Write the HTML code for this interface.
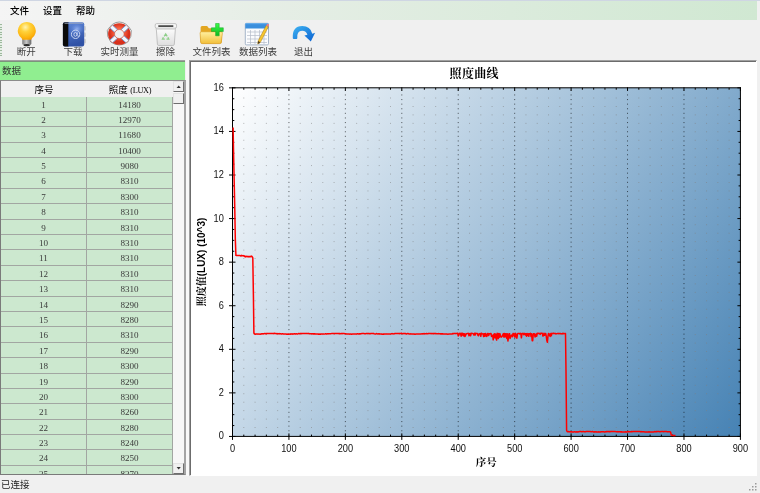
<!DOCTYPE html>
<html lang="zh"><head><meta charset="utf-8"><title>照度曲线</title>
<style>
html,body{margin:0;padding:0}
body{width:760px;height:493px;overflow:hidden;position:relative;background:#f0f0f0;font-family:"Liberation Serif","Noto Sans CJK SC",sans-serif;font-size:9.5px;color:#000}
.abs{position:absolute}
.topline{left:0;top:0;width:760px;height:1px;background:#cfd6e3}
.menubar{left:0;top:1px;width:757px;height:19px;background:linear-gradient(to right,#f5f5f5,#e6eee6 35%,#d0e8d2)}
.menubar span{position:absolute;top:4.3px;font-size:9.5px;line-height:12px;font-weight:500}
.toolbar{left:0;top:20px;width:760px;height:40px;background:#f0f0f0}
.grip{left:0;top:24px;width:2px;height:32px;background:repeating-linear-gradient(#9db89d 0 1px,#e6efe6 1px 2.6px)}
.tl{position:absolute;top:47.3px;width:40px;height:11px;text-align:center;font-size:9.5px;line-height:11px;color:#3c3c3c;white-space:nowrap}
.lhead{left:0;top:60px;width:185px;height:20px;background:#90ee90;box-sizing:border-box;border-top:1px solid #a2a0a2;box-shadow:inset 0 1px 0 #7c947c}
.lhead span{position:absolute;left:2px;top:3.5px;line-height:12px;color:#333}
.grid{left:0;top:80px;width:186px;height:395px;background:#fff;box-sizing:border-box;border:1px solid #7a7a7a;border-top-color:#8c8c8c;border-right:2px solid #a4a4a4;overflow:hidden}
.ghead{position:absolute;left:0;top:0;width:172px;height:15.5px;background:#f0f0f0;}
.ghead span{position:absolute;top:2.7px;line-height:12px;text-align:center;font-size:9.5px}
.ghead i{font-style:normal;font-size:8.3px;letter-spacing:-.35px;margin-left:2.5px}
.rows{position:absolute;left:0;top:15.5px;width:172px}
.r{height:15.4px;box-sizing:border-box;border-bottom:1px solid #a2a6a2;background:#cce8cf;position:relative}
.r span{position:absolute;top:0;height:14.4px;line-height:16.6px;text-align:center;color:#3a3a3a;font-size:9.1px}
.c1{left:0;width:85px;border-right:1px solid #a2a6a2}
.c2{left:86px;width:85px;border-right:1px solid #a2a6a2}
.sb{position:absolute;left:172px;top:0;width:11px;height:393px;background:#f7f7f7}
.sbtn{position:absolute;left:0;width:11px;height:11.3px;background:#f0f0f0;border:1px solid #6e6e6e;box-sizing:border-box;border-left-color:#e3e3e3;border-top-color:#e3e3e3}
.thumb{position:absolute;left:0;top:11.5px;width:11px;height:11.7px;background:#f0f0f0;border:1px solid #6e6e6e;border-left-color:#e3e3e3;border-top-color:#e3e3e3;box-sizing:border-box}
.split{left:186px;top:60px;width:3px;height:416px;background:#f8f8f8}
.chartwrap{left:189px;top:60px;width:568px;height:416px;box-sizing:border-box;border-left:1px solid #a0a0a0;border-top:1px solid #a0a0a0;border-right:1px solid #e6e6e6;border-bottom:1px solid #e6e6e6;background:#fff}
.chartwrap:after{content:'';position:absolute;left:0;top:0;right:0;bottom:0;border-left:1px solid #6c6c6c;border-top:1px solid #6c6c6c;pointer-events:none}
.chart{position:absolute;left:1px;top:0;display:block}
.status{left:0;top:476px;width:760px;height:17px;background:#f0f0f0}
.status span{position:absolute;left:1px;top:3px;line-height:12px;font-size:9.5px;color:#222}
#root{position:absolute;left:0;top:0;width:760px;height:493px;will-change:transform}
</style></head><body><div id="root">
<div class="abs topline"></div>
<div class="abs menubar"><span style="left:10px">文件</span><span style="left:43px">设置</span><span style="left:76px">帮助</span></div>
<div class="abs toolbar"></div>
<div class="abs grip"></div>
<svg class="abs" style="left:0;top:20px" width="340" height="30" viewBox="0 20 340 30">
<defs>
<radialGradient id="bulb" cx="0.42" cy="0.3" r="0.75"><stop offset="0" stop-color="#fff3b0"/><stop offset="0.35" stop-color="#ffd23a"/><stop offset="0.8" stop-color="#fdb20d"/><stop offset="1" stop-color="#f09a00"/></radialGradient>
<linearGradient id="base" x1="0" x2="1" y1="0" y2="0"><stop offset="0" stop-color="#8a8a8a"/><stop offset="0.45" stop-color="#e8e8e8"/><stop offset="1" stop-color="#6e6e6e"/></linearGradient>
<linearGradient id="cover" x1="0" x2="0.300" y1="0" y2="1"><stop offset="0" stop-color="#5f88da"/><stop offset="1" stop-color="#3052a6"/></linearGradient>
<radialGradient id="coverhl"><stop offset="0" stop-color="#a9c4ff" stop-opacity=".75"/><stop offset="1" stop-color="#6f95e6" stop-opacity="0"/></radialGradient>
<radialGradient id="buoy" cx="0.5" cy="0.4" r="0.6"><stop offset="0.4" stop-color="#ff6a4a"/><stop offset="1" stop-color="#d8301c"/></radialGradient>
<linearGradient id="bin" x1="0" x2="0" y1="0" y2="1"><stop offset="0" stop-color="#ffffff"/><stop offset="1" stop-color="#dedede"/></linearGradient>
<linearGradient id="fold" x1="0" x2="0" y1="0" y2="1"><stop offset="0" stop-color="#fff0a0"/><stop offset="1" stop-color="#f2bf3a"/></linearGradient>
<linearGradient id="plus" x1="0" x2="0" y1="0" y2="1"><stop offset="0" stop-color="#3dff4a"/><stop offset="1" stop-color="#0db520"/></linearGradient>
<linearGradient id="arr" x1="0" x2="1" y1="0" y2="1"><stop offset="0" stop-color="#3fb4f2"/><stop offset="1" stop-color="#0a5fd0"/></linearGradient>
</defs>
<!-- bulb -->
<g>
<path d="M22.3 38.2h9v5.2q0 2.2-4.5 2.2t-4.5-2.200z" fill="url(#base)"/>
<path d="M22.3 41h9M22.3 43h9" stroke="#555" stroke-width=".7" opacity=".6"/><ellipse cx="26.800" cy="45.200" rx="3.200" ry="1.100" fill="#2a2a2a"/>
<path d="M26.8 21.9a8.9 8.9 0 0 1 5.600 15.800q-1 .9-1.100 2h-9q-.1-1.100-1.100-2a8.900 8.900 0 0 1 5.600-15.800z" fill="url(#bulb)"/>
</g>
<!-- book -->
<g>
<rect x="83" y="26" width="3" height="4.600" rx="1.200" fill="#d2d2d2"/><rect x="83" y="32.400" width="3" height="4.600" rx="1.200" fill="#d2d2d2"/><rect x="83" y="38.800" width="3" height="4.600" rx="1.200" fill="#d2d2d2"/>
<rect x="62.900" y="22.200" width="21.300" height="24.300" rx="2" fill="url(#cover)"/>
<ellipse cx="77" cy="29" rx="7" ry="6" fill="url(#coverhl)"/>
<path d="M64.900 22.200h3.300v24.300h-3.300a2 2 0 0 1-2-2v-20.300a2 2 0 0 1 2-2z" fill="#0a0a0a"/>
<rect x="68.200" y="22.200" width=".9" height="24.300" fill="#27427f"/>
<path d="M64.500 23.300h18.500" stroke="#9aa6c0" stroke-width="1.100" opacity=".8"/>
<circle cx="75.600" cy="34.300" r="4.200" fill="none" stroke="#c6d3f1" stroke-width="1"/>
<ellipse cx="75.400" cy="34.400" rx="1.500" ry="1.900" fill="none" stroke="#c6d3f1" stroke-width="1"/>
<path d="M77.200 32.300v3.200q.4 1.500 1.900.4" fill="none" stroke="#c6d3f1" stroke-width=".9"/>
</g>
<!-- lifebuoy -->
<g>
<clipPath id="ringclip"><path clip-rule="evenodd" d="M108.100 34a11.200 10.700 0 1 0 22.400 0a11.200 10.700 0 1 0-22.400 0zM114.500 34a4.800 4.500 0 1 1 9.600 0a4.800 4.500 0 1 1-9.600 0z"/></clipPath>
<path d="M107.300 30.500q5-8.500 12-8.500t12 8.500q.8 6-3.500 11.500-4 3-8.500 3t-8.500-3q-4.300-5.500-3.500-11.500z" fill="none" stroke="#8f8f8f" stroke-width=".9"/>
<ellipse cx="119.300" cy="34" rx="8" ry="7.600" fill="none" stroke="url(#buoy)" stroke-width="6.400"/>
<g clip-path="url(#ringclip)">
<g stroke="#f2f8ff" stroke-width="3.600" fill="none"><path d="M109.300 24.700l7 6.500M129.300 24.700l-7 6.500M109.300 43.300l7-6.500M129.300 43.300l-7-6.500"/></g>
<g stroke="#6aa6e2" stroke-width=".9" fill="none"><path d="M110.600 23.300l7 6.500M108 26.100l7 6.500M128 23.300l-7 6.500M130.600 26.100l-7 6.500M110.600 44.700l7-6.500M108 41.900l7-6.500M128 44.700l-7-6.500M130.600 41.900l-7-6.500"/></g>
</g>
<ellipse cx="119.300" cy="34" rx="4.800" ry="4.500" fill="none" stroke="#c8402a" stroke-width=".5"/>
</g>
<!-- bin -->
<g>
<path d="M156.200 27h19.300l-1.200 17.300q-.1 1.200-1.400 1.200h-14.100q-1.300 0-1.400-1.200z" fill="url(#bin)" stroke="#b5b5b5" stroke-width=".8"/>
<rect x="155.200" y="23.600" width="21.300" height="4.600" rx="1.400" fill="#f6f6f6" stroke="#b5b5b5" stroke-width=".8"/>
<rect x="158.300" y="25.300" width="15" height="1.600" fill="#3a3a3a"/>
<path d="M155.800 29.300h20" stroke="#cfcfcf" stroke-width=".8"/>
<g fill="none" stroke="#8fcf8a" stroke-width="1.300"><path d="M164.200 36.300l1.500-2.400 1.500 2.400M167.900 37.200l.9 1.900h-2.300M163.400 37.300l-.9 1.800h2.300"/></g>
</g>
<!-- folder -->
<g>
<path d="M200.600 27.500q0-1.500 1.500-1.500h5l1.800 2.200h11.300q1.500 0 1.500 1.500v12.300q0 1.500-1.500 1.500h-18.100q-1.500 0-1.500-1.500z" fill="#e3a623"/>
<path d="M202.300 31.800h18.900q1.400 0 1.200 1.400l-1.100 9q-.2 1.400-1.600 1.400h-17.500q-1.400 0-1.500-1.400l-.6-9q-.1-1.400 1.300-1.400z" fill="url(#fold)" stroke="#d69a1c" stroke-width=".6"/>
<path d="M215.600 23.500h3.600v4.300h4.100v3.700h-4.100v4.300h-3.600v-4.300h-4.200v-3.700h4.200z" fill="url(#plus)" stroke="#12a524" stroke-width=".5"/>
</g>
<!-- table -->
<g>
<rect x="245.300" y="23.300" width="23.200" height="21.600" rx="1.200" fill="#fbfcfe" stroke="#8fa3bd" stroke-width=".8"/>
<path d="M245.300 24.500q0-1.200 1.200-1.200h20.800q1.200 0 1.200 1.200v3.900h-23.200z" fill="#3c8fdd"/>
<path d="M245.300 23.700h23.200" stroke="#6fb6f2" stroke-width=".8"/>
<g stroke="#b4bcc8" stroke-width=".7"><path d="M247 32h20M247 35.500h20M247 39h20M247 42.500h20M250.500 30v14M255 30v14M259.500 30v14M264 30v14"/></g>
<path d="M266.200 25.500l2.200 1.200-8 15.600-2.600 1.800.3-3.100z" fill="#f7c62f" stroke="#a97a12" stroke-width=".5"/>
<path d="M266.200 25.500l2.200 1.200.6-1.200q.4-1-.6-1.500-1-.5-1.600.4z" fill="#ef7b86"/>
<path d="M257.800 44.100l.3-3.100 2.300 1.300z" fill="#4a3a22"/>
</g>
<!-- exit arrow -->
<g>
<path d="M292.800 38.300q-.8-12 9.500-12.200 8 0 10 7.600l2.800-.9-4.300 8.700-6.400-5.900 3-.8q-1.300-4.200-5.300-4.100-5.500.4-4.800 7.400 0 .9-.9.900h-2.700q-.9 0-.9-.7z" fill="url(#arr)"/>
</g>
</svg>
<div class="tl" style="left:6.300px">断开</div>
<div class="tl" style="left:53px">下载</div>
<div class="tl" style="left:99.500px">实时测量</div>
<div class="tl" style="left:145.500px">擦除</div>
<div class="tl" style="left:191.500px">文件列表</div>
<div class="tl" style="left:238px">数据列表</div>
<div class="tl" style="left:283.500px">退出</div>

<div class="abs lhead"><span>数据</span></div>
<div class="abs grid">
 <div class="ghead"><span style="left:0;width:86px">序号</span><span style="left:86px;width:86px">照度<i>(LUX)</i></span></div>
 <div class="rows">
<div class="r"><span class="c1">1</span><span class="c2">14180</span></div>
<div class="r"><span class="c1">2</span><span class="c2">12970</span></div>
<div class="r"><span class="c1">3</span><span class="c2">11680</span></div>
<div class="r"><span class="c1">4</span><span class="c2">10400</span></div>
<div class="r"><span class="c1">5</span><span class="c2">9080</span></div>
<div class="r"><span class="c1">6</span><span class="c2">8310</span></div>
<div class="r"><span class="c1">7</span><span class="c2">8300</span></div>
<div class="r"><span class="c1">8</span><span class="c2">8310</span></div>
<div class="r"><span class="c1">9</span><span class="c2">8310</span></div>
<div class="r"><span class="c1">10</span><span class="c2">8310</span></div>
<div class="r"><span class="c1">11</span><span class="c2">8310</span></div>
<div class="r"><span class="c1">12</span><span class="c2">8310</span></div>
<div class="r"><span class="c1">13</span><span class="c2">8310</span></div>
<div class="r"><span class="c1">14</span><span class="c2">8290</span></div>
<div class="r"><span class="c1">15</span><span class="c2">8280</span></div>
<div class="r"><span class="c1">16</span><span class="c2">8310</span></div>
<div class="r"><span class="c1">17</span><span class="c2">8290</span></div>
<div class="r"><span class="c1">18</span><span class="c2">8300</span></div>
<div class="r"><span class="c1">19</span><span class="c2">8290</span></div>
<div class="r"><span class="c1">20</span><span class="c2">8300</span></div>
<div class="r"><span class="c1">21</span><span class="c2">8260</span></div>
<div class="r"><span class="c1">22</span><span class="c2">8280</span></div>
<div class="r"><span class="c1">23</span><span class="c2">8240</span></div>
<div class="r"><span class="c1">24</span><span class="c2">8250</span></div>
<div class="r"><span class="c1">25</span><span class="c2">8270</span></div>
<div class="r"><span class="c1">26</span><span class="c2">8260</span></div>
 </div>
 <div class="sb"><div class="sbtn" style="top:0"></div><div class="thumb"></div><div class="sbtn" style="top:382px"></div>
 <svg style="position:absolute;left:0;top:0" width="11" height="393"><path d="M3.6 7L5.7 4.500L7.800 7Z" fill="#333"/><path d="M3.600 386L5.700 388.500L7.800 386Z" fill="#333"/></svg></div>
</div>
<div class="abs split"></div>
<div class="abs chartwrap">
<svg class="chart" width="566" height="415" viewBox="191 61 566 415">
<defs><linearGradient id="g" gradientUnits="userSpaceOnUse" x1="232.5" y1="87.85" x2="740.4" y2="436.45"><stop offset="0" stop-color="#ffffff"/><stop offset="1" stop-color="#4682b4"/></linearGradient></defs>
<rect x="191" y="61" width="566" height="415" fill="#fff"/>
<rect x="232.5" y="87.8" width="507.9" height="348.6" fill="url(#g)"/>
<line x1="243.79" y1="89.1" x2="243.79" y2="436.4" stroke="#808080" stroke-opacity=".62" stroke-width="1" stroke-dasharray="0.9 7.55"/>
<line x1="255.07" y1="89.1" x2="255.07" y2="436.4" stroke="#808080" stroke-opacity=".62" stroke-width="1" stroke-dasharray="0.9 7.55"/>
<line x1="266.36" y1="89.1" x2="266.36" y2="436.4" stroke="#808080" stroke-opacity=".62" stroke-width="1" stroke-dasharray="0.9 7.55"/>
<line x1="277.65" y1="89.1" x2="277.65" y2="436.4" stroke="#808080" stroke-opacity=".62" stroke-width="1" stroke-dasharray="0.9 7.55"/>
<line x1="300.22" y1="89.1" x2="300.22" y2="436.4" stroke="#808080" stroke-opacity=".62" stroke-width="1" stroke-dasharray="0.9 7.55"/>
<line x1="311.51" y1="89.1" x2="311.51" y2="436.4" stroke="#808080" stroke-opacity=".62" stroke-width="1" stroke-dasharray="0.9 7.55"/>
<line x1="322.79" y1="89.1" x2="322.79" y2="436.4" stroke="#808080" stroke-opacity=".62" stroke-width="1" stroke-dasharray="0.9 7.55"/>
<line x1="334.08" y1="89.1" x2="334.08" y2="436.4" stroke="#808080" stroke-opacity=".62" stroke-width="1" stroke-dasharray="0.9 7.55"/>
<line x1="356.65" y1="89.1" x2="356.65" y2="436.4" stroke="#808080" stroke-opacity=".62" stroke-width="1" stroke-dasharray="0.9 7.55"/>
<line x1="367.94" y1="89.1" x2="367.94" y2="436.4" stroke="#808080" stroke-opacity=".62" stroke-width="1" stroke-dasharray="0.9 7.55"/>
<line x1="379.23" y1="89.1" x2="379.23" y2="436.4" stroke="#808080" stroke-opacity=".62" stroke-width="1" stroke-dasharray="0.9 7.55"/>
<line x1="390.51" y1="89.1" x2="390.51" y2="436.4" stroke="#808080" stroke-opacity=".62" stroke-width="1" stroke-dasharray="0.9 7.55"/>
<line x1="413.09" y1="89.1" x2="413.09" y2="436.4" stroke="#808080" stroke-opacity=".62" stroke-width="1" stroke-dasharray="0.9 7.55"/>
<line x1="424.37" y1="89.1" x2="424.37" y2="436.4" stroke="#808080" stroke-opacity=".62" stroke-width="1" stroke-dasharray="0.9 7.55"/>
<line x1="435.66" y1="89.1" x2="435.66" y2="436.4" stroke="#808080" stroke-opacity=".62" stroke-width="1" stroke-dasharray="0.9 7.55"/>
<line x1="446.95" y1="89.1" x2="446.95" y2="436.4" stroke="#808080" stroke-opacity=".62" stroke-width="1" stroke-dasharray="0.9 7.55"/>
<line x1="469.52" y1="89.1" x2="469.52" y2="436.4" stroke="#808080" stroke-opacity=".62" stroke-width="1" stroke-dasharray="0.9 7.55"/>
<line x1="480.81" y1="89.1" x2="480.81" y2="436.4" stroke="#808080" stroke-opacity=".62" stroke-width="1" stroke-dasharray="0.9 7.55"/>
<line x1="492.09" y1="89.1" x2="492.09" y2="436.4" stroke="#808080" stroke-opacity=".62" stroke-width="1" stroke-dasharray="0.9 7.55"/>
<line x1="503.38" y1="89.1" x2="503.38" y2="436.4" stroke="#808080" stroke-opacity=".62" stroke-width="1" stroke-dasharray="0.9 7.55"/>
<line x1="525.95" y1="89.1" x2="525.95" y2="436.4" stroke="#808080" stroke-opacity=".62" stroke-width="1" stroke-dasharray="0.9 7.55"/>
<line x1="537.24" y1="89.1" x2="537.24" y2="436.4" stroke="#808080" stroke-opacity=".62" stroke-width="1" stroke-dasharray="0.9 7.55"/>
<line x1="548.53" y1="89.1" x2="548.53" y2="436.4" stroke="#808080" stroke-opacity=".62" stroke-width="1" stroke-dasharray="0.9 7.55"/>
<line x1="559.81" y1="89.1" x2="559.81" y2="436.4" stroke="#808080" stroke-opacity=".62" stroke-width="1" stroke-dasharray="0.9 7.55"/>
<line x1="582.39" y1="89.1" x2="582.39" y2="436.4" stroke="#808080" stroke-opacity=".62" stroke-width="1" stroke-dasharray="0.9 7.55"/>
<line x1="593.67" y1="89.1" x2="593.67" y2="436.4" stroke="#808080" stroke-opacity=".62" stroke-width="1" stroke-dasharray="0.9 7.55"/>
<line x1="604.96" y1="89.1" x2="604.96" y2="436.4" stroke="#808080" stroke-opacity=".62" stroke-width="1" stroke-dasharray="0.9 7.55"/>
<line x1="616.25" y1="89.1" x2="616.25" y2="436.4" stroke="#808080" stroke-opacity=".62" stroke-width="1" stroke-dasharray="0.9 7.55"/>
<line x1="638.82" y1="89.1" x2="638.82" y2="436.4" stroke="#808080" stroke-opacity=".62" stroke-width="1" stroke-dasharray="0.9 7.55"/>
<line x1="650.11" y1="89.1" x2="650.11" y2="436.4" stroke="#808080" stroke-opacity=".62" stroke-width="1" stroke-dasharray="0.9 7.55"/>
<line x1="661.39" y1="89.1" x2="661.39" y2="436.4" stroke="#808080" stroke-opacity=".62" stroke-width="1" stroke-dasharray="0.9 7.55"/>
<line x1="672.68" y1="89.1" x2="672.68" y2="436.4" stroke="#808080" stroke-opacity=".62" stroke-width="1" stroke-dasharray="0.9 7.55"/>
<line x1="695.25" y1="89.1" x2="695.25" y2="436.4" stroke="#808080" stroke-opacity=".62" stroke-width="1" stroke-dasharray="0.9 7.55"/>
<line x1="706.54" y1="89.1" x2="706.54" y2="436.4" stroke="#808080" stroke-opacity=".62" stroke-width="1" stroke-dasharray="0.9 7.55"/>
<line x1="717.83" y1="89.1" x2="717.83" y2="436.4" stroke="#808080" stroke-opacity=".62" stroke-width="1" stroke-dasharray="0.9 7.55"/>
<line x1="729.11" y1="89.1" x2="729.11" y2="436.4" stroke="#808080" stroke-opacity=".62" stroke-width="1" stroke-dasharray="0.9 7.55"/>
<line x1="288.93" y1="89.8" x2="288.93" y2="436.4" stroke="#000" stroke-opacity=".58" stroke-width="1" stroke-dasharray="1.1 3.5"/>
<line x1="345.37" y1="89.8" x2="345.37" y2="436.4" stroke="#000" stroke-opacity=".58" stroke-width="1" stroke-dasharray="1.1 3.5"/>
<line x1="401.80" y1="89.8" x2="401.80" y2="436.4" stroke="#000" stroke-opacity=".58" stroke-width="1" stroke-dasharray="1.1 3.5"/>
<line x1="458.23" y1="89.8" x2="458.23" y2="436.4" stroke="#000" stroke-opacity=".58" stroke-width="1" stroke-dasharray="1.1 3.5"/>
<line x1="514.67" y1="89.8" x2="514.67" y2="436.4" stroke="#000" stroke-opacity=".58" stroke-width="1" stroke-dasharray="1.1 3.5"/>
<line x1="571.10" y1="89.8" x2="571.10" y2="436.4" stroke="#000" stroke-opacity=".58" stroke-width="1" stroke-dasharray="1.1 3.5"/>
<line x1="627.53" y1="89.8" x2="627.53" y2="436.4" stroke="#000" stroke-opacity=".58" stroke-width="1" stroke-dasharray="1.1 3.5"/>
<line x1="683.97" y1="89.8" x2="683.97" y2="436.4" stroke="#000" stroke-opacity=".58" stroke-width="1" stroke-dasharray="1.1 3.5"/>
<path d="M232.50 433.4V439.9M232.50 87.3V90.8M243.79 434.6V436.4M243.79 87.8V89.6M255.07 434.6V436.4M255.07 87.8V89.6M266.36 434.6V436.4M266.36 87.8V89.6M277.65 434.6V436.4M277.65 87.8V89.6M288.93 433.4V439.9M288.93 87.3V90.8M300.22 434.6V436.4M300.22 87.8V89.6M311.51 434.6V436.4M311.51 87.8V89.6M322.79 434.6V436.4M322.79 87.8V89.6M334.08 434.6V436.4M334.08 87.8V89.6M345.37 433.4V439.9M345.37 87.3V90.8M356.65 434.6V436.4M356.65 87.8V89.6M367.94 434.6V436.4M367.94 87.8V89.6M379.23 434.6V436.4M379.23 87.8V89.6M390.51 434.6V436.4M390.51 87.8V89.6M401.80 433.4V439.9M401.80 87.3V90.8M413.09 434.6V436.4M413.09 87.8V89.6M424.37 434.6V436.4M424.37 87.8V89.6M435.66 434.6V436.4M435.66 87.8V89.6M446.95 434.6V436.4M446.95 87.8V89.6M458.23 433.4V439.9M458.23 87.3V90.8M469.52 434.6V436.4M469.52 87.8V89.6M480.81 434.6V436.4M480.81 87.8V89.6M492.09 434.6V436.4M492.09 87.8V89.6M503.38 434.6V436.4M503.38 87.8V89.6M514.67 433.4V439.9M514.67 87.3V90.8M525.95 434.6V436.4M525.95 87.8V89.6M537.24 434.6V436.4M537.24 87.8V89.6M548.53 434.6V436.4M548.53 87.8V89.6M559.81 434.6V436.4M559.81 87.8V89.6M571.10 433.4V439.9M571.10 87.3V90.8M582.39 434.6V436.4M582.39 87.8V89.6M593.67 434.6V436.4M593.67 87.8V89.6M604.96 434.6V436.4M604.96 87.8V89.6M616.25 434.6V436.4M616.25 87.8V89.6M627.53 433.4V439.9M627.53 87.3V90.8M638.82 434.6V436.4M638.82 87.8V89.6M650.11 434.6V436.4M650.11 87.8V89.6M661.39 434.6V436.4M661.39 87.8V89.6M672.68 434.6V436.4M672.68 87.8V89.6M683.97 433.4V439.9M683.97 87.3V90.8M695.25 434.6V436.4M695.25 87.8V89.6M706.54 434.6V436.4M706.54 87.8V89.6M717.83 434.6V436.4M717.83 87.8V89.6M729.11 434.6V436.4M729.11 87.8V89.6M740.40 433.4V439.9M740.40 87.3V90.8M229.0 436.45H235.5M737.4 436.45H740.9M232.5 425.56H234.3M738.6 425.56H740.4M232.5 414.66H234.3M738.6 414.66H740.4M232.5 403.77H234.3M738.6 403.77H740.4M229.0 392.88H235.5M737.4 392.88H740.9M232.5 381.98H234.3M738.6 381.98H740.4M232.5 371.09H234.3M738.6 371.09H740.4M232.5 360.19H234.3M738.6 360.19H740.4M229.0 349.30H235.5M737.4 349.30H740.9M232.5 338.41H234.3M738.6 338.41H740.4M232.5 327.51H234.3M738.6 327.51H740.4M232.5 316.62H234.3M738.6 316.62H740.4M229.0 305.72H235.5M737.4 305.72H740.9M232.5 294.83H234.3M738.6 294.83H740.4M232.5 283.94H234.3M738.6 283.94H740.4M232.5 273.04H234.3M738.6 273.04H740.4M229.0 262.15H235.5M737.4 262.15H740.9M232.5 251.26H234.3M738.6 251.26H740.4M232.5 240.36H234.3M738.6 240.36H740.4M232.5 229.47H234.3M738.6 229.47H740.4M229.0 218.57H235.5M737.4 218.57H740.9M232.5 207.68H234.3M738.6 207.68H740.4M232.5 196.79H234.3M738.6 196.79H740.4M232.5 185.89H234.3M738.6 185.89H740.4M229.0 175.00H235.5M737.4 175.00H740.9M232.5 164.11H234.3M738.6 164.11H740.4M232.5 153.21H234.3M738.6 153.21H740.4M232.5 142.32H234.3M738.6 142.32H740.4M229.0 131.43H235.5M737.4 131.43H740.9M232.5 120.53H234.3M738.6 120.53H740.4M232.5 109.64H234.3M738.6 109.64H740.4M232.5 98.74H234.3M738.6 98.74H740.4M229.0 87.85H235.5M737.4 87.85H740.9" stroke="#000" stroke-width="1" fill="none"/>
<rect x="232.5" y="87.8" width="507.9" height="348.6" fill="none" stroke="#000" stroke-width="1"/>
<polyline points="233.1,127.5 233.6,153.9 234.2,182.0 234.8,209.9 235.3,238.6 235.9,255.4 236.5,255.6 237.0,255.4 237.6,255.4 238.1,255.4 238.7,255.4 239.3,255.4 239.8,255.4 240.4,255.8 241.0,256.0 241.5,255.4 242.1,255.8 242.7,255.6 243.2,255.8 243.8,255.6 244.4,256.5 244.9,256.0 245.5,256.9 246.0,256.7 246.6,256.3 247.2,256.5 247.7,256.7 248.3,256.4 248.9,256.9 249.4,256.8 250.0,256.2 250.6,256.8 251.1,256.4 251.7,256.1 252.3,256.9 252.8,257.8 253.4,294.8 253.9,333.0 254.5,334.0 255.1,334.1 255.6,334.2 256.2,334.0 256.8,334.1 257.3,333.9 257.9,334.2 258.5,334.1 259.0,333.9 259.6,334.2 260.2,334.2 260.7,334.0 261.3,334.1 261.8,333.7 262.4,333.7 263.0,334.0 263.5,333.8 264.1,333.6 264.7,333.6 265.2,333.8 265.8,333.5 266.4,333.7 266.9,333.5 267.5,333.6 268.1,333.6 268.6,333.6 269.2,333.4 269.7,333.4 270.3,333.5 270.9,333.5 271.4,333.6 272.0,333.4 272.6,333.5 273.1,333.4 273.7,333.7 274.3,333.3 274.8,333.5 275.4,333.4 276.0,333.7 276.5,333.6 277.1,333.8 277.6,333.6 278.2,333.7 278.8,333.7 279.3,333.6 279.9,333.9 280.5,333.7 281.0,333.9 281.6,334.0 282.2,333.8 282.7,333.8 283.3,334.0 283.9,333.9 284.4,334.1 285.0,333.9 285.5,333.9 286.1,334.0 286.7,334.2 287.2,334.2 287.8,334.1 288.4,334.3 288.9,333.9 289.5,334.1 290.1,334.3 290.6,334.0 291.2,333.8 291.8,334.1 292.3,334.2 292.9,333.8 293.4,333.9 294.0,333.9 294.6,333.7 295.1,334.0 295.7,334.0 296.3,333.7 296.8,333.9 297.4,333.9 298.0,333.9 298.5,333.5 299.1,333.6 299.7,333.8 300.2,333.5 300.8,333.6 301.3,333.5 301.9,333.7 302.5,333.4 303.0,333.4 303.6,333.5 304.2,333.6 304.7,333.5 305.3,333.4 305.9,333.4 306.4,333.6 307.0,333.6 307.6,333.4 308.1,333.7 308.7,333.4 309.2,333.7 309.8,333.7 310.4,333.7 310.9,333.8 311.5,333.7 312.1,333.9 312.6,333.7 313.2,334.0 313.8,333.7 314.3,334.0 314.9,333.8 315.5,333.9 316.0,334.0 316.6,334.0 317.1,334.1 317.7,334.1 318.3,334.2 318.8,334.0 319.4,334.2 320.0,334.1 320.5,334.2 321.1,334.0 321.7,334.0 322.2,334.0 322.8,334.1 323.4,334.1 323.9,334.1 324.5,334.1 325.1,333.9 325.6,333.7 326.2,334.1 326.7,334.0 327.3,333.7 327.9,333.9 328.4,333.8 329.0,333.7 329.6,333.8 330.1,333.7 330.7,333.8 331.3,333.6 331.8,333.4 332.4,333.4 333.0,333.4 333.5,333.4 334.1,333.7 334.6,333.6 335.2,333.6 335.8,333.6 336.3,333.6 336.9,333.5 337.5,333.6 338.0,333.5 338.6,333.5 339.2,333.7 339.7,333.5 340.3,333.7 340.9,333.6 341.4,333.5 342.0,333.7 342.5,333.5 343.1,333.6 343.7,333.6 344.2,333.6 344.8,333.7 345.4,333.8 345.9,333.8 346.5,333.9 347.1,334.0 347.6,334.1 348.2,334.0 348.8,334.1 349.3,334.1 349.9,334.2 350.4,334.1 351.0,334.0 351.6,334.2 352.1,334.2 352.7,333.9 353.3,334.0 353.8,334.1 354.4,334.0 355.0,334.0 355.5,334.0 356.1,333.9 356.7,333.9 357.2,333.8 357.8,333.8 358.3,334.0 358.9,334.0 359.5,333.8 360.0,334.0 360.6,333.8 361.2,333.7 361.7,333.6 362.3,333.5 362.9,333.4 363.4,333.6 364.0,333.6 364.6,333.7 365.1,333.7 365.7,333.7 366.2,333.5 366.8,333.5 367.4,333.5 367.9,333.4 368.5,333.5 369.1,333.5 369.6,333.7 370.2,333.7 370.8,333.5 371.3,333.6 371.9,333.6 372.5,333.4 373.0,333.6 373.6,333.5 374.1,333.7 374.7,333.9 375.3,333.9 375.8,334.0 376.4,333.6 377.0,333.7 377.5,333.9 378.1,334.0 378.7,333.8 379.2,333.8 379.8,334.0 380.4,334.0 380.9,334.1 381.5,334.0 382.0,334.2 382.6,334.2 383.2,334.0 383.7,334.2 384.3,334.0 384.9,334.1 385.4,334.1 386.0,334.0 386.6,334.1 387.1,333.9 387.7,334.0 388.3,334.0 388.8,334.0 389.4,333.9 389.9,333.9 390.5,334.1 391.1,333.8 391.6,333.7 392.2,333.6 392.8,333.8 393.3,333.9 393.9,333.7 394.5,333.8 395.0,333.4 395.6,333.5 396.2,333.6 396.7,333.6 397.3,333.4 397.8,333.5 398.4,333.4 399.0,333.5 399.5,333.7 400.1,333.4 400.7,333.6 401.2,333.3 401.8,333.3 402.4,333.7 402.9,333.7 403.5,333.5 404.1,333.5 404.6,333.4 405.2,333.8 405.8,333.5 406.3,333.9 406.9,333.9 407.4,333.6 408.0,333.6 408.6,333.7 409.1,334.0 409.7,333.9 410.3,333.9 410.8,333.8 411.4,334.1 412.0,334.0 412.5,334.1 413.1,334.1 413.7,334.1 414.2,333.9 414.8,334.3 415.3,334.2 415.9,334.1 416.5,334.1 417.0,334.1 417.6,334.0 418.2,333.9 418.7,333.9 419.3,334.0 419.9,333.9 420.4,334.0 421.0,334.1 421.6,333.8 422.1,333.8 422.7,333.9 423.2,333.6 423.8,333.9 424.4,333.7 424.9,333.6 425.5,333.8 426.1,333.7 426.6,333.5 427.2,333.8 427.8,333.8 428.3,333.5 428.9,333.5 429.5,333.4 430.0,333.5 430.6,333.6 431.1,333.7 431.7,333.5 432.3,333.6 432.8,333.7 433.4,333.5 434.0,333.7 434.5,333.5 435.1,333.5 435.7,333.6 436.2,333.6 436.8,333.8 437.4,333.8 437.9,333.7 438.5,333.6 439.0,333.8 439.6,333.7 440.2,333.7 440.7,334.0 441.3,333.8 441.9,334.0 442.4,333.8 443.0,333.8 443.6,334.1 444.1,333.9 444.7,334.0 445.3,334.1 445.8,334.0 446.4,334.1 446.9,333.9 447.5,334.2 448.1,334.2 448.6,334.1 449.2,333.9 449.8,334.0 450.3,333.9 450.9,334.1 451.5,334.0 452.0,334.1 452.6,333.5 453.2,333.8 453.7,333.5 454.3,333.6 454.8,333.4 455.4,333.7 456.0,333.4 456.5,333.6 457.1,333.5 457.7,333.2 458.2,335.9 458.8,335.4 459.4,333.4 459.9,333.3 460.5,333.5 461.1,336.2 461.6,333.3 462.2,335.4 462.7,333.3 463.3,333.6 463.9,336.1 464.4,333.8 465.0,336.5 465.6,335.3 466.1,333.6 466.7,333.9 467.3,333.5 467.8,333.6 468.4,333.3 469.0,335.7 469.5,333.7 470.1,333.6 470.6,335.8 471.2,333.3 471.8,333.5 472.3,333.6 472.9,333.6 473.5,333.9 474.0,335.1 474.6,333.2 475.2,335.1 475.7,333.3 476.3,333.6 476.9,333.5 477.4,333.4 478.0,335.6 478.5,335.7 479.1,333.7 479.7,333.7 480.2,333.6 480.8,336.3 481.4,333.2 481.9,333.6 482.5,333.9 483.1,333.7 483.6,336.6 484.2,333.7 484.8,336.2 485.3,333.5 485.9,333.8 486.4,336.4 487.0,336.2 487.6,333.4 488.1,333.5 488.7,335.6 489.3,333.8 489.8,333.8 490.4,333.6 491.0,333.5 491.5,336.4 492.1,335.9 492.7,335.4 493.2,339.8 493.8,334.5 494.4,333.9 494.9,337.8 495.5,333.9 496.0,338.1 496.6,340.1 497.2,333.3 497.7,333.6 498.3,338.6 498.9,333.5 499.4,337.2 500.0,333.8 500.6,336.4 501.1,337.1 501.7,336.6 502.3,336.1 502.8,334.8 503.4,333.6 503.9,337.1 504.5,333.5 505.1,336.9 505.6,333.7 506.2,333.7 506.8,338.4 507.3,333.8 507.9,341.0 508.5,338.1 509.0,333.7 509.6,333.7 510.2,338.4 510.7,336.7 511.3,335.6 511.8,335.1 512.4,336.7 513.0,333.6 513.5,333.5 514.1,335.4 514.7,337.1 515.2,333.2 515.8,333.8 516.4,337.7 516.9,338.1 517.5,333.8 518.1,333.4 518.6,333.4 519.2,333.5 519.7,333.9 520.3,333.4 520.9,333.9 521.4,337.8 522.0,333.4 522.6,333.6 523.1,333.3 523.7,334.7 524.3,333.4 524.8,333.4 525.4,334.9 526.0,333.7 526.5,336.2 527.1,333.4 527.6,335.6 528.2,333.7 528.8,336.3 529.3,333.7 529.9,333.9 530.5,333.3 531.0,336.5 531.6,333.7 532.2,340.8 532.7,340.8 533.3,333.7 533.9,333.9 534.4,333.7 535.0,336.9 535.5,336.3 536.1,333.9 536.7,336.2 537.2,333.3 537.8,333.5 538.4,333.5 538.9,333.3 539.5,333.4 540.1,334.4 540.6,333.2 541.2,333.3 541.8,333.3 542.3,333.3 542.9,336.1 543.4,335.7 544.0,333.2 544.6,335.3 545.1,333.8 545.7,333.5 546.3,336.4 546.8,340.4 547.4,342.2 548.0,336.2 548.5,333.5 549.1,333.7 549.7,335.7 550.2,336.4 550.8,333.5 551.3,335.8 551.9,333.3 552.5,333.6 553.0,333.6 553.6,333.2 554.2,333.6 554.7,333.5 555.3,333.4 555.9,333.9 556.4,333.7 557.0,333.7 557.6,333.4 558.1,333.7 558.7,333.5 559.2,333.5 559.8,333.4 560.4,333.7 560.9,333.6 561.5,333.8 562.1,333.9 562.6,333.4 563.2,333.3 563.8,333.8 564.3,333.6 564.9,333.4 565.5,333.4 566.0,371.1 566.6,430.3 567.1,431.5 567.7,431.7 568.3,431.6 568.8,431.7 569.4,431.9 570.0,431.7 570.5,431.8 571.1,432.0 571.7,431.7 572.2,431.9 572.8,432.0 573.4,432.0 573.9,431.9 574.5,431.7 575.1,431.9 575.6,431.9 576.2,431.8 576.7,432.0 577.3,432.0 577.9,431.8 578.4,431.9 579.0,431.7 579.6,431.6 580.1,431.6 580.7,431.5 581.3,431.6 581.8,431.8 582.4,431.7 583.0,431.4 583.5,431.6 584.1,431.7 584.6,431.7 585.2,431.7 585.8,431.7 586.3,431.4 586.9,431.5 587.5,431.6 588.0,431.4 588.6,431.5 589.2,431.6 589.7,431.5 590.3,431.6 590.9,431.7 591.4,431.7 592.0,431.6 592.5,431.5 593.1,431.8 593.7,431.9 594.2,432.0 594.8,431.8 595.4,431.9 595.9,431.7 596.5,432.0 597.1,432.0 597.6,432.0 598.2,431.9 598.8,431.8 599.3,431.9 599.9,432.1 600.4,432.0 601.0,431.8 601.6,431.7 602.1,431.7 602.7,431.7 603.3,431.8 603.8,431.8 604.4,431.9 605.0,431.9 605.5,431.8 606.1,431.8 606.7,431.5 607.2,431.7 607.8,431.6 608.3,431.6 608.9,431.7 609.5,431.6 610.0,431.7 610.6,431.5 611.2,431.6 611.7,431.4 612.3,431.5 612.9,431.4 613.4,431.4 614.0,431.4 614.6,431.6 615.1,431.4 615.7,431.6 616.2,431.8 616.8,431.7 617.4,431.9 617.9,431.6 618.5,431.9 619.1,431.7 619.6,431.7 620.2,431.7 620.8,432.0 621.3,431.7 621.9,432.0 622.5,431.9 623.0,432.0 623.6,431.9 624.1,431.9 624.7,432.0 625.3,432.0 625.8,431.8 626.4,431.9 627.0,432.0 627.5,431.8 628.1,431.7 628.7,431.6 629.2,431.7 629.8,431.7 630.4,431.7 630.9,431.8 631.5,431.4 632.0,431.8 632.6,431.6 633.2,431.5 633.7,431.5 634.3,431.5 634.9,431.6 635.4,431.5 636.0,431.5 636.6,431.4 637.1,431.5 637.7,431.5 638.3,431.4 638.8,431.4 639.4,431.4 639.9,431.4 640.5,431.8 641.1,431.8 641.6,431.6 642.2,431.7 642.8,431.7 643.3,431.8 643.9,431.7 644.5,431.9 645.0,431.9 645.6,431.9 646.2,432.0 646.7,432.1 647.3,432.0 647.8,432.0 648.4,432.0 649.0,431.8 649.5,432.0 650.1,432.0 650.7,432.0 651.2,432.0 651.8,431.9 652.4,432.0 652.9,431.9 653.5,431.9 654.1,431.8 654.6,431.6 655.2,431.7 655.8,431.8 656.3,431.5 656.9,431.7 657.4,431.6 658.0,431.6 658.6,431.6 659.1,431.6 659.7,431.7 660.3,431.7 660.8,431.6 661.4,431.5 662.0,431.4 662.5,431.6 663.1,431.6 663.7,431.7 664.2,431.6 664.8,431.6 665.3,431.6 665.9,431.6 666.5,431.6 667.0,431.7 667.6,431.9 668.2,431.7 668.7,431.8 669.3,431.8 669.9,431.8 670.6,432.1 671.3,435.1 673.2,435.4 675.5,435.5" fill="none" stroke="#ff0000" stroke-width="1.5" stroke-linejoin="round"/>
<g font-family="'Liberation Sans', sans-serif" font-size="10.6" fill="#111">
<text transform="translate(232.5,451.7) scale(.87,1)" text-anchor="middle">0</text>
<text transform="translate(288.9,451.7) scale(.87,1)" text-anchor="middle">100</text>
<text transform="translate(345.4,451.7) scale(.87,1)" text-anchor="middle">200</text>
<text transform="translate(401.8,451.7) scale(.87,1)" text-anchor="middle">300</text>
<text transform="translate(458.2,451.7) scale(.87,1)" text-anchor="middle">400</text>
<text transform="translate(514.7,451.7) scale(.87,1)" text-anchor="middle">500</text>
<text transform="translate(571.1,451.7) scale(.87,1)" text-anchor="middle">600</text>
<text transform="translate(627.5,451.7) scale(.87,1)" text-anchor="middle">700</text>
<text transform="translate(684.0,451.7) scale(.87,1)" text-anchor="middle">800</text>
<text transform="translate(740.4,451.7) scale(.87,1)" text-anchor="middle">900</text>
<text transform="translate(223.8,439.4) scale(.87,1)" text-anchor="end">0</text>
<text transform="translate(223.8,395.9) scale(.87,1)" text-anchor="end">2</text>
<text transform="translate(223.8,352.3) scale(.87,1)" text-anchor="end">4</text>
<text transform="translate(223.8,308.7) scale(.87,1)" text-anchor="end">6</text>
<text transform="translate(223.8,265.1) scale(.87,1)" text-anchor="end">8</text>
<text transform="translate(223.8,221.6) scale(.87,1)" text-anchor="end">10</text>
<text transform="translate(223.8,178.0) scale(.87,1)" text-anchor="end">12</text>
<text transform="translate(223.8,134.4) scale(.87,1)" text-anchor="end">14</text>
<text transform="translate(223.8,90.8) scale(.87,1)" text-anchor="end">16</text>
</g>
<text x="474.2" y="78.3" text-anchor="middle" font-family="'Liberation Serif', 'Noto Serif CJK SC', serif" font-weight="bold" font-size="12" letter-spacing="0.3" fill="#000">照度曲线</text>
<text x="486.2" y="466.2" text-anchor="middle" font-family="'Liberation Serif', 'Noto Serif CJK SC', serif" font-weight="bold" font-size="10.5" fill="#000">序号</text>
<text transform="translate(205,262) rotate(-90)" text-anchor="middle" font-family="'Liberation Sans', 'Noto Serif CJK SC', sans-serif" font-weight="bold" font-size="10" fill="#000">照度值(LUX) (10^3)</text>
</svg>
</div>
<div class="abs status"><span>已连接</span>
<svg style="position:absolute;right:2px;bottom:1px" width="10" height="10"><g fill="#9a9a9a"><rect x="7" y="1" width="1.5" height="1.5"/><rect x="4" y="4" width="1.5" height="1.5"/><rect x="7" y="4" width="1.5" height="1.5"/><rect x="1" y="7" width="1.5" height="1.5"/><rect x="4" y="7" width="1.5" height="1.5"/><rect x="7" y="7" width="1.5" height="1.5"/></g></svg></div>
</div></body></html>
